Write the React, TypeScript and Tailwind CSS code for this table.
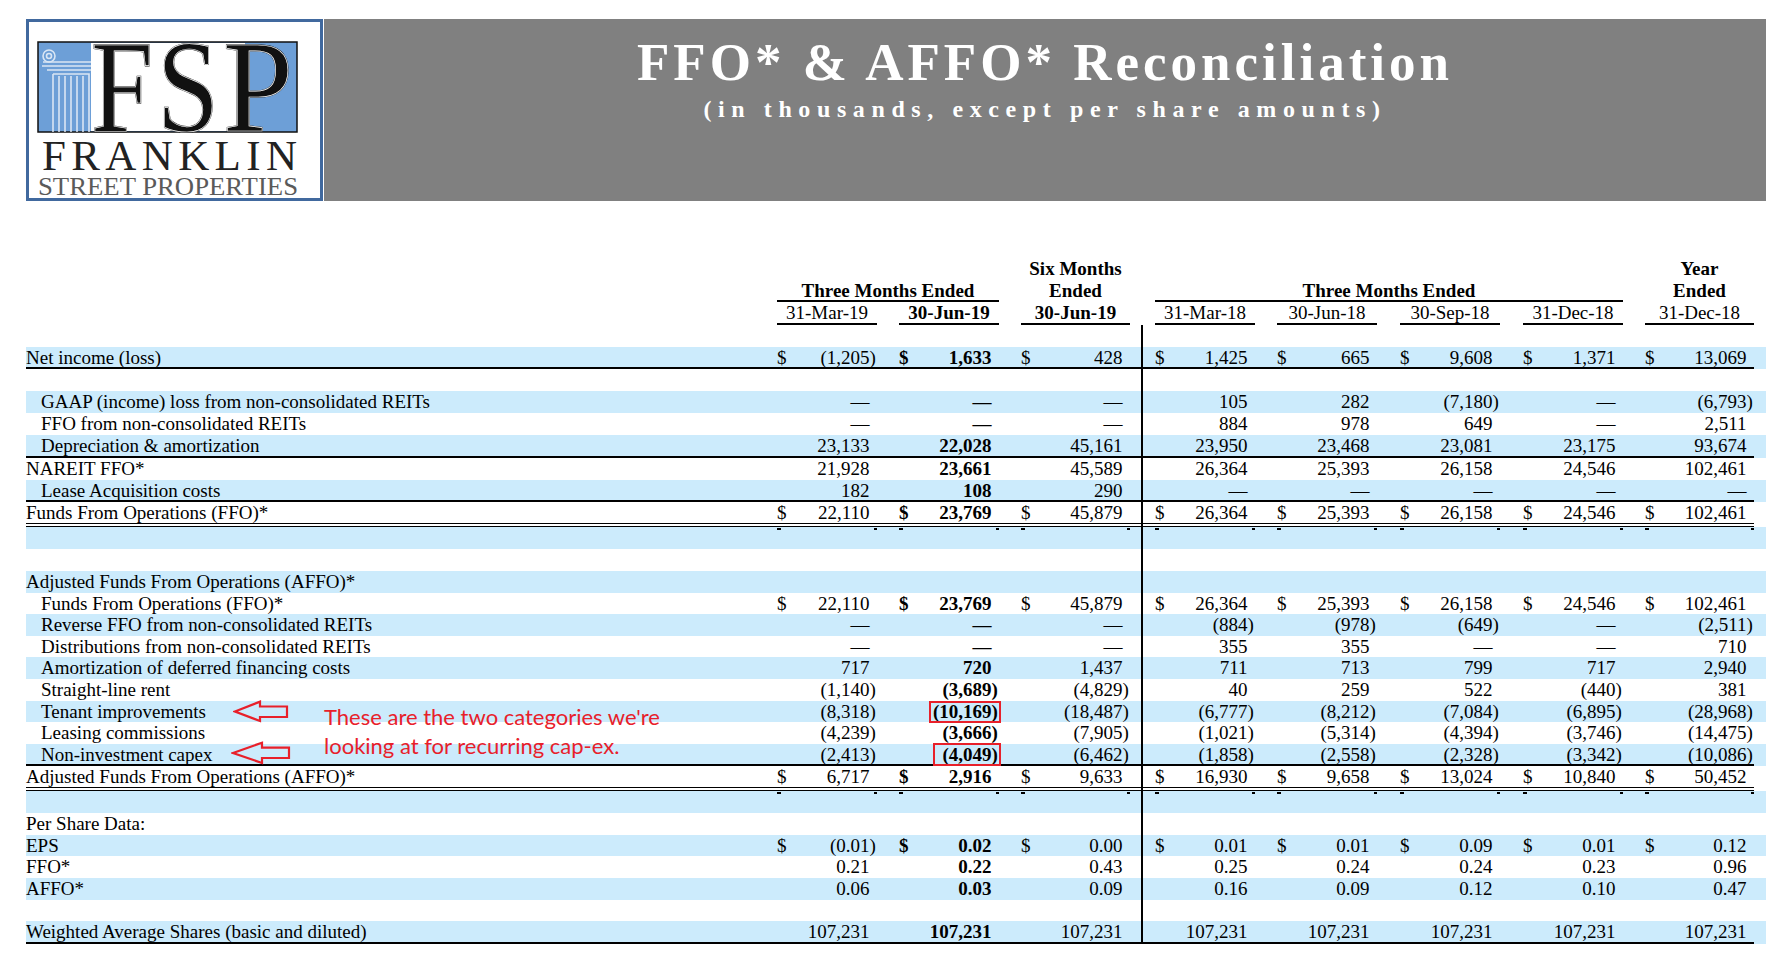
import clsx from 'clsx'

type Line = 'none' | 'single' | 'double'
type RowData = {
  label: string
  indent?: boolean
  vals?: string[]
  dollar?: boolean
  line?: Line
  mark?: 'tenant' | 'capex'
}

const COLS = [
  { w: 'w-[100px]', ml: '' },
  { w: 'w-[100px]', ml: 'ml-[22px]' },
  { w: 'w-[109px]', ml: 'ml-[22px]' },
  { w: 'w-[100px]', ml: 'ml-[12px]' },
  { w: 'w-[100px]', ml: 'ml-[22px]' },
  { w: 'w-[100px]', ml: 'ml-[23px]' },
  { w: 'w-[100px]', ml: 'ml-[23px]' },
  { w: 'w-[109px]', ml: 'ml-[22px]' },
]

const D = '—'

const ROWS: RowData[] = [
  { label: 'Net income (loss)', dollar: true, line: 'single', vals: ['(1,205)', '1,633', '428', '1,425', '665', '9,608', '1,371', '13,069'] },
  { label: '' },
  { label: 'GAAP (income) loss from non-consolidated REITs', indent: true, vals: [D, D, D, '105', '282', '(7,180)', D, '(6,793)'] },
  { label: 'FFO from non-consolidated REITs', indent: true, vals: [D, D, D, '884', '978', '649', D, '2,511'] },
  { label: 'Depreciation & amortization', indent: true, line: 'single', vals: ['23,133', '22,028', '45,161', '23,950', '23,468', '23,081', '23,175', '93,674'] },
  { label: 'NAREIT FFO*', vals: ['21,928', '23,661', '45,589', '26,364', '25,393', '26,158', '24,546', '102,461'] },
  { label: 'Lease Acquisition costs', indent: true, line: 'single', vals: ['182', '108', '290', D, D, D, D, D] },
  { label: 'Funds From Operations (FFO)*', dollar: true, line: 'double', vals: ['22,110', '23,769', '45,879', '26,364', '25,393', '26,158', '24,546', '102,461'] },
  { label: '' },
  { label: '' },
  { label: 'Adjusted Funds From Operations (AFFO)*' },
  { label: 'Funds From Operations (FFO)*', indent: true, dollar: true, vals: ['22,110', '23,769', '45,879', '26,364', '25,393', '26,158', '24,546', '102,461'] },
  { label: 'Reverse FFO from non-consolidated REITs', indent: true, vals: [D, D, D, '(884)', '(978)', '(649)', D, '(2,511)'] },
  { label: 'Distributions from non-consolidated REITs', indent: true, vals: [D, D, D, '355', '355', D, D, '710'] },
  { label: 'Amortization of deferred financing costs', indent: true, vals: ['717', '720', '1,437', '711', '713', '799', '717', '2,940'] },
  { label: 'Straight-line rent', indent: true, vals: ['(1,140)', '(3,689)', '(4,829)', '40', '259', '522', '(440)', '381'] },
  { label: 'Tenant improvements', indent: true, mark: 'tenant', vals: ['(8,318)', '(10,169)', '(18,487)', '(6,777)', '(8,212)', '(7,084)', '(6,895)', '(28,968)'] },
  { label: 'Leasing commissions', indent: true, vals: ['(4,239)', '(3,666)', '(7,905)', '(1,021)', '(5,314)', '(4,394)', '(3,746)', '(14,475)'] },
  { label: 'Non-investment capex', indent: true, mark: 'capex', line: 'single', vals: ['(2,413)', '(4,049)', '(6,462)', '(1,858)', '(2,558)', '(2,328)', '(3,342)', '(10,086)'] },
  { label: 'Adjusted Funds From Operations (AFFO)*', dollar: true, line: 'double', vals: ['6,717', '2,916', '9,633', '16,930', '9,658', '13,024', '10,840', '50,452'] },
  { label: '' },
  { label: 'Per Share Data:' },
  { label: 'EPS', dollar: true, vals: ['(0.01)', '0.02', '0.00', '0.01', '0.01', '0.09', '0.01', '0.12'] },
  { label: 'FFO*', vals: ['0.21', '0.22', '0.43', '0.25', '0.24', '0.24', '0.23', '0.96'] },
  { label: 'AFFO*', vals: ['0.06', '0.03', '0.09', '0.16', '0.09', '0.12', '0.10', '0.47'] },
  { label: '' },
  { label: 'Weighted Average Shares (basic and diluted)', line: 'single', vals: ['107,231', '107,231', '107,231', '107,231', '107,231', '107,231', '107,231', '107,231'] },
]

// row heights as measured off the printed page (double-ruled rows are a bit taller)
function rowHeight(i: number) {
  if (i < 7) return 'h-[22.2px]'
  if (i === 7) return 'h-[24.7px]'
  if (i < 10) return 'h-[22.15px]'
  if (i < 19) return 'h-[21.65px]'
  if (i === 19) return 'h-[25px]'
  if (i < 22) return 'h-[22px]'
  if (i < 26) return 'h-[21.7px]'
  return 'h-[23px]'
}

const DATES = ['31-Mar-19', '30-Jun-19', '30-Jun-19', '31-Mar-18', '30-Jun-18', '30-Sep-18', '31-Dec-18', '31-Dec-18']

const LOGO_FONT = "'Liberation Serif', 'Times New Roman', serif"

function FspLetters({ fill, stroke, width }: { fill: string; stroke: string; width: number }) {
  return (
    <g fill={fill} stroke={stroke} strokeWidth={width}>
      <text x="62" y="109" textLength="62" lengthAdjust="spacingAndGlyphs">F</text>
      <text x="128" y="109" textLength="62" lengthAdjust="spacingAndGlyphs">S</text>
      <text x="194" y="109" textLength="70" lengthAdjust="spacingAndGlyphs">P</text>
    </g>
  )
}

function Logo() {
  return (
    <div className="w-[297px] h-[182px] shrink-0 border-[3px] border-[#41699e] bg-white">
      <svg width="291" height="176" viewBox="0 0 291 176" className="block">
        <rect x="9" y="20" width="259" height="90" fill="#6d9fd7" stroke="#111" strokeWidth="1.5" />
        <rect x="62" y="21" width="154" height="88" fill="#fff" />
        {/* column capital and fluted shaft */}
        <g stroke="#e6eef8" fill="none" strokeWidth="1.6" opacity="0.9">
          <circle cx="20" cy="34" r="6" />
          <circle cx="20" cy="34" r="2.5" />
          <path d="M14 40 H62 M13 44 H62 M18 48 H62" />
          <path d="M24 52 H60 V110 M24 52 V110" />
          <path d="M30 54 V110 M36 54 V110 M42 54 V110 M48 54 V110 M54 54 V110" />
        </g>
        <g fontFamily={LOGO_FONT} fontSize="132">
          <FspLetters fill="#111" stroke="#111" width={1.4} />
          <FspLetters fill="none" stroke="#fff" width={0.7} />
        </g>
        <text x="13" y="148" fontFamily={LOGO_FONT} fontSize="43" fill="#222" textLength="255" lengthAdjust="spacing">FRANKLIN</text>
        <text x="9" y="173" fontFamily={LOGO_FONT} fontSize="25" fill="#5a5a5a" textLength="260" lengthAdjust="spacingAndGlyphs">STREET PROPERTIES</text>
      </svg>
    </div>
  )
}

function Arrow({ w, h, points }: { w: number; h: number; points: string }) {
  return (
    <svg width={w} height={h} viewBox={`0 0 ${w} ${h}`} className="block">
      <polygon points={points} fill="none" stroke="#e8202a" strokeWidth="2.2" strokeLinejoin="miter" />
    </svg>
  )
}

type CellProps = { v: string; dollar?: boolean; bold?: boolean; w: string; ml: string; mark?: 'tenant' | 'capex'; ticks?: boolean }

function Cell({ v, dollar, bold, w, ml, mark, ticks }: CellProps) {
  const paren = v.endsWith(')')
  const main = paren ? v.slice(0, -1) : v
  return (
    <div className={clsx(w, ml, 'relative flex shrink-0 justify-between pr-[7.5px]', bold && 'font-bold')}>
      <span>{dollar ? '$' : ''}</span>
      <span className="whitespace-nowrap">
        {main}
        {paren && <span className="inline-block w-0">)</span>}
      </span>
      {mark === 'tenant' && <div className="absolute left-[30px] top-0 h-[22.5px] w-[72px] border-2 border-[#e8202a]" />}
      {mark === 'capex' && <div className="absolute left-[34px] -top-[1.3px] h-[23px] w-[68px] border-2 border-[#e8202a]" />}
      {ticks && (
        <>
          <div className="absolute -bottom-[7px] left-0 h-[1.5px] w-[4px] bg-black" />
          <div className="absolute -bottom-[7px] right-0 h-[1.5px] w-[3px] bg-black" />
        </>
      )}
    </div>
  )
}

function Row({ r, i }: { r: RowData; i: number }) {
  const vals = r.vals ?? ['', '', '', '', '', '', '', '']
  const h = rowHeight(i)
  const ticks = r.line === 'double'
  return (
    <div className={clsx(h, 'w-[1740px]', i % 2 === 0 && 'bg-[#ccebfc]')}>
      <div
        className={clsx(
          'flex h-full w-[1728px] leading-[22px]',
          r.line === 'single' && 'border-b-2 border-black',
          r.line === 'double' && 'border-b-[4px] border-double border-black'
        )}
      >
        <div className={clsx('relative w-[751px] shrink-0 whitespace-nowrap', r.indent && 'pl-[15px]')}>
          {r.label}
          {r.mark === 'tenant' && (
            <>
              <div className="absolute left-[207px] -top-[1px]">
                <Arrow w={58} h={24} points="2,11.5 27,1.7 27,6.5 54,6.5 54,17 27,17 27,21" />
              </div>
              <div className="absolute left-[298px] top-[1px] whitespace-nowrap font-['Lato',sans-serif] text-[22px] leading-[29px] text-[#e8202a]">
                <div>These are the two categories we're</div>
                <div>looking at for recurring cap-ex.</div>
              </div>
            </>
          )}
          {r.mark === 'capex' && (
            <div className="absolute left-[205px] -top-[3.3px]">
              <Arrow w={62} h={25} points="2,12 31,1.7 31,6.7 58,6.7 58,17 31,17 31,22" />
            </div>
          )}
        </div>
        {vals.slice(0, 3).map((v, k) => (
          <Cell key={k} v={v} dollar={r.dollar} bold={k === 1} w={COLS[k].w} ml={COLS[k].ml} mark={k === 1 ? r.mark : undefined} ticks={ticks} />
        ))}
        <div className={clsx('ml-[11px] w-[2px] shrink-0 bg-black', h)} />
        {vals.slice(3).map((v, k) => (
          <Cell key={k + 3} v={v} dollar={r.dollar} w={COLS[k + 3].w} ml={COLS[k + 3].ml} ticks={ticks} />
        ))}
      </div>
    </div>
  )
}

function Header() {
  return (
    <div className="w-[1728px] leading-[22px] font-bold">
      <div className="flex h-[22.12px]">
        <div className="w-[751px] shrink-0" />
        <div className="w-[244px] shrink-0" />
        <div className="w-[109px] shrink-0 text-center">Six Months</div>
        <div className="w-[25px] shrink-0" />
        <div className="w-[490px] shrink-0" />
        <div className="w-[109px] shrink-0 text-center">Year</div>
      </div>
      <div className="flex h-[22.12px]">
        <div className="w-[751px] shrink-0" />
        <div className="w-[222px] shrink-0 border-b-2 border-black text-center">Three Months Ended</div>
        <div className="w-[22px] shrink-0" />
        <div className="w-[109px] shrink-0 text-center">Ended</div>
        <div className="w-[25px] shrink-0" />
        <div className="w-[468px] shrink-0 border-b-2 border-black text-center">Three Months Ended</div>
        <div className="w-[22px] shrink-0" />
        <div className="w-[109px] shrink-0 text-center">Ended</div>
      </div>
      <div className="flex h-[22.12px]">
        <div className="w-[751px] shrink-0" />
        {DATES.map((d, k) => (
          <div key={k} className="contents">
            {k === 3 && <div className="ml-[11px] w-[2px] shrink-0" />}
            <div className={clsx(COLS[k].w, COLS[k].ml, 'shrink-0 border-b-2 border-black text-center', k === 1 || k === 2 ? 'font-bold' : 'font-normal')}>
              {d}
            </div>
          </div>
        ))}
      </div>
      <div className="flex h-[22.12px]">
        <div className="w-[1115px] shrink-0" />
        <div className="w-[2px] shrink-0 bg-black" />
      </div>
    </div>
  )
}

export default function App() {
  return (
    <div className="h-[959px] w-[1778px] overflow-hidden bg-white pl-[26px] pt-[19px] font-['Liberation_Serif','Times_New_Roman',serif] text-[19px] text-black">
      <div className="flex h-[182px] gap-[1px]">
        <Logo />
        <div className="flex h-[182px] w-[1442px] flex-col items-center bg-[#808080] text-white">
          <div className="mt-[16.6px] text-[53px] font-bold leading-[53px] tracking-[4px]">FFO* &amp; AFFO* Reconciliation</div>
          <div className="mt-[8.6px] text-[24px] font-bold leading-[24px] tracking-[6.6px]">(in thousands, except per share amounts)</div>
        </div>
      </div>
      <div className="mt-[57.2px]">
        <Header />
        {ROWS.map((r, i) => (
          <Row key={i} r={r} i={i} />
        ))}
      </div>
    </div>
  )
}
